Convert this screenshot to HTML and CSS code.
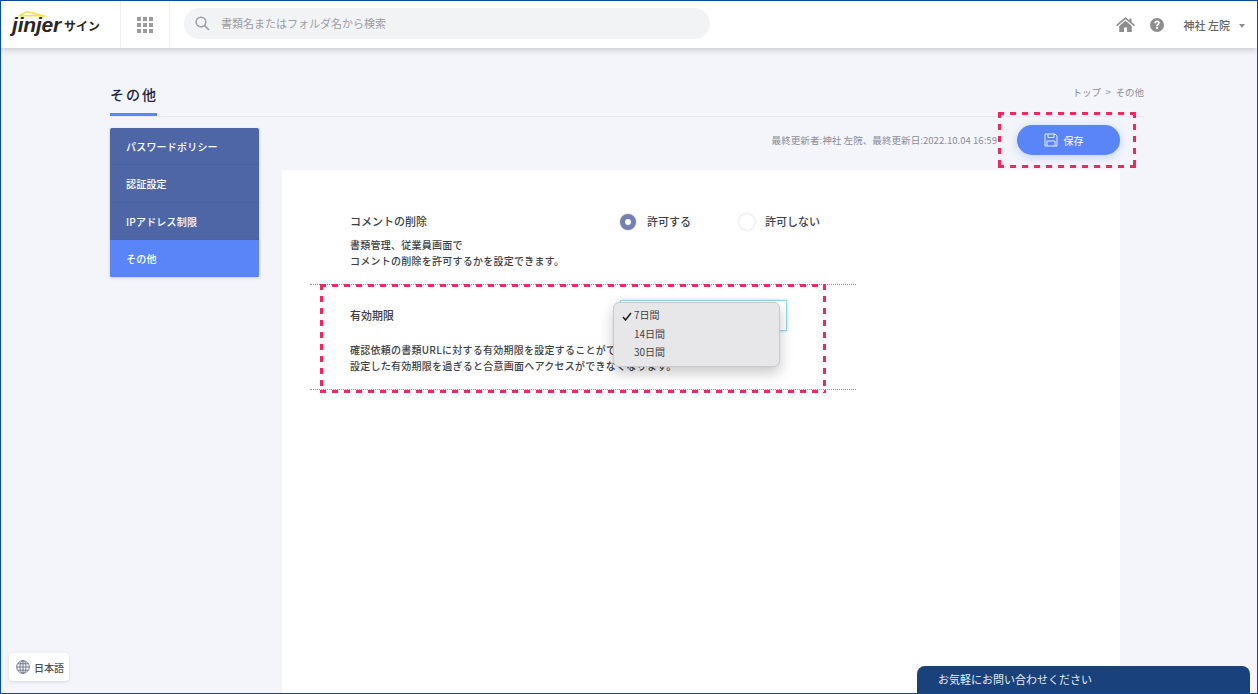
FILE: index.html
```html
<!DOCTYPE html>
<html lang="ja">
<head>
	<meta charset="UTF-8">
	<title>その他</title>
	<link rel="stylesheet" href="styles.css">
</head>
<body>
	<div class="frame">
		<div class="header">
			<div class="logo">
				<svg class="logo_roof" width="28" height="8" viewBox="0 0 28 8"><path d="M1 6 L9 1.500 L27 6.200 L15 5.500 Z" fill="none" stroke="#f1e24a" stroke-width="1.600"/></svg>
				<span class="logo_word">jinjer</span>
				<span class="logo_sign">サイン</span>
			</div>
			<div class="apps">
				<svg width="16" height="16" viewBox="0 0 16 16" fill="#9b9b9b">
					<rect x="0" y="0" width="4" height="4"/><rect x="6" y="0" width="4" height="4"/><rect x="12" y="0" width="4" height="4"/>
					<rect x="0" y="6" width="4" height="4"/><rect x="6" y="6" width="4" height="4"/><rect x="12" y="6" width="4" height="4"/>
					<rect x="0" y="12" width="4" height="4"/><rect x="6" y="12" width="4" height="4"/><rect x="12" y="12" width="4" height="4"/>
				</svg>
			</div>
			<div class="search">
				<svg width="15" height="15" viewBox="0 0 15 15" fill="none" stroke="#9a9da3" stroke-width="1.500"><circle cx="6" cy="6" r="4.800"/><path d="M9.600 9.600 L14 14"/></svg>
				<span>書類名またはフォルダ名から検索</span>
			</div>
			<div class="header_right">
				<svg class="home" width="19" height="15" viewBox="0 0 19 15" fill="#8e8e8e"><path d="M9.500 0 L13.500 3.400 V1.500 H15.500 V5.100 L19 8 L18 9.200 L9.500 2.200 L1 9.200 L0 8 Z"/><path d="M3.200 9 L9.500 3.800 L15.800 9 V15 H11 V10.500 H8 V15 H3.200 Z"/></svg>
				<svg class="help" width="14" height="14" viewBox="0 0 14 14"><circle cx="7" cy="7" r="7" fill="#8e8e8e"/><path d="M4.300 5.300 C4.400 3.500 5.600 2.600 7.100 2.600 C8.700 2.600 9.800 3.600 9.800 5 C9.800 6.900 7.900 6.900 7.900 8.300 H6.100 C6.100 6.200 8 6.200 8 5.100 C8 4.600 7.600 4.200 7 4.200 C6.400 4.200 6 4.700 6 5.500 Z" fill="#fff"/><rect x="6.100" y="9" width="1.800" height="1.900" fill="#fff"/></svg>
				<span class="user">神社 左院</span>
				<span class="caret"></span>
			</div>
		</div>

		<div class="content">
			<div class="title_bar">
				<h1 class="title">その他</h1>
				<p class="crumb">トップ &gt; その他</p>
			</div>
			<div class="columns">
				<ul class="side">
					<li>パスワードポリシー</li>
					<li>認証設定</li>
					<li>IPアドレス制限</li>
					<li class="active">その他</li>
				</ul>
				<div class="main">
					<div class="toolbar">
						<span class="updated">最終更新者:神社 左院、最終更新日:2022.10.04 16:59</span>
						<button class="btn_save">
							<svg width="14" height="14" viewBox="0 0 14 14" fill="none" stroke="#e6ecff" stroke-width="1"><path d="M1 1 H11 L13 3 V13 H1 Z"/><path d="M4 1 V4.500 H10 V1"/><path d="M3 13 V8 H11 V13"/></svg>
							保存
						</button>
					</div>
					<div class="panel">
						<div class="row row_first">
							<div class="row_head">
								<span class="row_label">コメントの削除</span>
								<label class="radio"><i class="dot on"></i>許可する</label>
								<label class="radio radio2"><i class="dot"></i>許可しない</label>
							</div>
							<p class="row_desc">書類管理、従業員画面で<br>コメントの削除を許可するかを設定できます。</p>
						</div>
						<div class="row row_second">
							<div class="row_head">
								<span class="row_label">有効期限</span>
								<div class="select_box"></div>
							</div>
							<p class="row_desc">確認依頼の書類URLに対する有効期限を設定することができます。<br>設定した有効期限を過ぎると合意画面へアクセスができなくなります。</p>
						</div>
					</div>
				</div>
			</div>
		</div>

		<!-- 注釈の赤い点線 -->
		<div class="mark mark_save"></div>
		<div class="mark mark_row"></div>

		<ul class="popup">
			<li class="checked">
				<svg class="check" width="10" height="9" viewBox="0 0 10 9" fill="none" stroke="#1c1c1e" stroke-width="1.500"><path d="M1 5 L3.500 8 L9 1"/></svg>
				7日間
			</li>
			<li>14日間</li>
			<li>30日間</li>
		</ul>

		<div class="lang">
			<svg width="14" height="14" viewBox="0 0 14 14" fill="none" stroke="#6f7a8a" stroke-width="1"><circle cx="7" cy="7" r="6.300"/><ellipse cx="7" cy="7" rx="3" ry="6.300"/><path d="M7 .7 V13.300 M.7 7 H13.300 M1.600 3.800 H12.400 M1.600 10.200 H12.400"/></svg>
			日本語
		</div>
		<div class="contact">お気軽にお問い合わせください</div>
	</div>
</body>
</html>
```

FILE: styles.css
```css
*{
	padding:0;
	margin:0;
	box-sizing:border-box;
}
html,body{
	height:100%;
	overflow:hidden;
}
body{
	font-family:"Noto Sans CJK JP","Liberation Sans",sans-serif;
	color:#3c3f46;
}
ul{
	list-style:none;
}
.frame{
	position:relative;
	height:694px;
	border:1px solid #0b4a9e;
	background:#f4f5fa;
	overflow:hidden;
}

/* header */
.header{
	position:relative;
	z-index:2;
	display:flex;
	align-items:center;
	height:47px;
	background:#fff;
	box-shadow:0 2px 6px rgba(0,0,0,.18);
}
.logo{
	position:relative;
	display:flex;
	align-items:center;
	width:120px;
	height:47px;
	padding:1px 0 0 11px;
	border-right:1px solid #f0f0f0;
}
.logo_roof{
	position:absolute;
	left:17px;
	top:9px;
}
.logo_word{
	font-family:"Liberation Sans",sans-serif;
	font-size:21px;
	font-weight:bold;
	font-style:italic;
	color:#2c2620;
	letter-spacing:-.2px;
}
.logo_sign{
	margin-left:3px;
	font-size:12px;
	font-weight:700;
	color:#2c2620;
}
.apps{
	display:flex;
	align-items:center;
	justify-content:center;
	width:49px;
	height:47px;
	border-right:1px solid #f0f0f0;
}
.search{
	display:flex;
	align-items:center;
	gap:11px;
	width:526px;
	height:31px;
	margin:0 0 2px 14px;
	padding:0 0 1px 11px;
	border-radius:16px;
	background:#f2f3f4;
	font-size:11px;
	color:#9a9da3;
}
.header_right{
	display:flex;
	align-items:center;
	margin-left:auto;
	padding-right:12px;
}
.help{
	margin-left:15px;
}
.user{
	margin-left:20px;
	font-size:11px;
	font-weight:500;
	color:#666;
}
.caret{
	width:0;
	height:0;
	margin:2px 0 0 9px;
	border-left:3px solid transparent;
	border-right:3px solid transparent;
	border-top:4px solid #8e8e8e;
}

/* content */
.content{
	padding:0 113px 0 109px;
}
.title_bar{
	display:flex;
	justify-content:space-between;
	height:69px;
	border-bottom:1px solid #e6e8f2;
}
.title{
	width:47px;
	height:68px;
	padding-top:36px;
	border-bottom:3px solid #5a85f8;
	font-size:14px;
	line-height:20px;
	font-weight:500;
	letter-spacing:2px;
	color:#1b2340;
	white-space:nowrap;
}
.crumb{
	padding-top:37px;
	font-size:9.500px;
	line-height:14px;
	word-spacing:2.500px;
	color:#8a8d96;
}
.columns{
	display:flex;
}
.side{
	width:149px;
	height:149px;
	margin-top:11px;
	border-radius:2px;
	overflow:hidden;
	background:#4f66a6;
	box-shadow:0 1px 3px rgba(60,70,120,.25);
}
.side>li{
	height:37px;
	padding-left:16px;
	border-bottom:1px solid #4a60a0;
	font-size:10px;
	line-height:37px;
	font-weight:500;
	letter-spacing:.2px;
	color:#fff;
}
.side>li:nth-child(2){
	height:38px;
}
.side>li.active{
	background:#5a85f8;
	border-bottom:0;
}
.main{
	width:838px;
	margin-left:23px;
}
.toolbar{
	display:flex;
	align-items:center;
	justify-content:flex-end;
	height:53px;
	padding-bottom:7px;
}
.updated{
	margin-right:20px;
	font-size:9.600px;
	color:#8a8d96;
}
.btn_save{
	display:flex;
	align-items:center;
	justify-content:center;
	gap:6px;
	width:103px;
	height:30px;
	padding-right:10px;
	border:0;
	border-radius:15px;
	background:#5a85f8;
	box-shadow:0 2px 10px rgba(90,133,248,.35);
	font-family:inherit;
	font-size:10px;
	color:#fff;
}
.panel{
	height:530px;
	padding:0 264px 0 28px;
	background:#fff;
}
.row{
	padding-left:40px;
	border-bottom:1px dotted #8f8f8f;
}
.row_first{
	height:115px;
	padding-top:43px;
}
.row_second{
	height:105px;
	padding-top:22px;
}
.row_head{
	display:flex;
	align-items:center;
	position:relative;
	height:18px;
	padding-bottom:2px;
}
.row_label{
	width:270px;
	font-size:11px;
	font-weight:500;
}
.radio{
	display:flex;
	align-items:center;
	gap:11px;
	font-size:11px;
	font-weight:500;
}
.radio2{
	margin-left:48px;
	gap:10px;
}
.dot{
	width:16px;
	height:16px;
	margin-top:2px;
	border-radius:50%;
	background:#fff;
	box-shadow:0 0 2px rgba(0,0,0,.25);
}
.dot.on{
	background:#757fb4;
	border:5px solid #757fb4;
}
.dot.on::after{
	content:"";
	display:block;
	width:6px;
	height:6px;
	border-radius:50%;
	background:#fff;
}
.select_box{
	position:absolute;
	left:270px;
	top:-7px;
	width:167px;
	height:31px;
	border:1px solid #8fd6ee;
	box-shadow:0 0 3px #a9e0f2;
}
.row_desc{
	font-size:10px;
	line-height:16px;
	font-weight:500;
	letter-spacing:.25px;
	white-space:nowrap;
}
.row_first .row_desc{
	margin-top:6px;
}
.row_second .row_desc{
	margin-top:17px;
}

/* overlays */
.mark{
	position:absolute;
	background:
		linear-gradient(90deg,#f5265f 50%,transparent 50%) top left/12px 3px repeat-x,
		linear-gradient(90deg,#f5265f 50%,transparent 50%) bottom left/12px 3px repeat-x,
		linear-gradient(180deg,#f5265f 50%,transparent 50%) top left/3px 12px repeat-y,
		linear-gradient(180deg,#f5265f 50%,transparent 50%) top right/3px 12px repeat-y;
}
.mark_save{
	left:997px;
	top:111px;
	width:138px;
	height:56px;
}
.mark_row{
	left:319px;
	top:283px;
	width:506px;
	height:109px;
}
.popup{
	position:absolute;
	z-index:3;
	left:612px;
	top:301px;
	width:167px;
	height:65px;
	padding-top:3px;
	border:1px solid #c9c9cb;
	border-radius:6px;
	background:#e7e7e9;
	box-shadow:0 6px 14px rgba(0,0,0,.22);
}
.popup>li{
	position:relative;
	height:18.500px;
	padding-left:20px;
	font-size:10px;
	line-height:18px;
	color:#3c3f46;
}
.check{
	position:absolute;
	left:8px;
	top:6px;
}
.lang{
	position:absolute;
	left:8px;
	bottom:12px;
	display:flex;
	align-items:center;
	gap:4px;
	width:60px;
	height:28px;
	padding-left:7px;
	border-radius:4px;
	background:#fff;
	box-shadow:0 1px 3px rgba(0,0,0,.12);
	font-size:10px;
	font-weight:500;
	color:#4a4d55;
}
.contact{
	position:absolute;
	left:916px;
	bottom:-1px;
	width:333px;
	height:28px;
	padding:5px 0 0 21px;
	border-radius:8px 8px 0 0;
	background:#19417c;
	font-size:11px;
	line-height:16px;
	color:#e8edf5;
}
```
